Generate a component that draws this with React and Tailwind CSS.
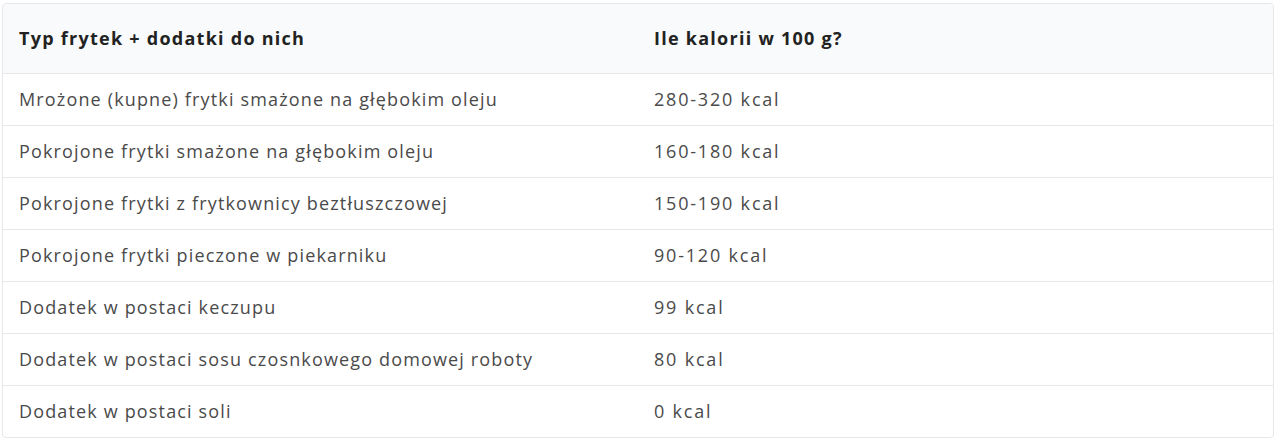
const rows = [
  ["Mrożone (kupne) frytki smażone na głębokim oleju", "280-320 kcal"],
  ["Pokrojone frytki smażone na głębokim oleju", "160-180 kcal"],
  ["Pokrojone frytki z frytkownicy beztłuszczowej", "150-190 kcal"],
  ["Pokrojone frytki pieczone w piekarniku", "90-120 kcal"],
  ["Dodatek w postaci keczupu", "99 kcal"],
  ["Dodatek w postaci sosu czosnkowego domowej roboty", "80 kcal"],
  ["Dodatek w postaci soli", "0 kcal"],
];

export default function App() {
  return (
    <div className="bg-white pl-[2px] pr-[6px] pt-[3px] font-['Open_Sans',sans-serif]">
      <table className="w-full border-separate border-spacing-0 overflow-hidden rounded-[4px] border border-[#e5e7eb] text-left">
        <thead>
          <tr className="bg-[#f9fafb]">
            <th className="h-[69px] w-[651px] pl-4 align-middle text-[18px] font-bold tracking-[0.07em] text-[#222222]">
              Typ frytek + dodatki do nich
            </th>
            <th className="h-[69px] align-middle text-[18px] font-bold tracking-[0.07em] text-[#222222]">
              Ile kalorii w 100 g?
            </th>
          </tr>
        </thead>
        <tbody>
          {rows.map(([name, kcal]) => (
            <tr key={name}>
              <td className="h-[52px] border-t border-[#e5e7eb] pl-4 align-middle text-[18px] tracking-[0.064em] text-[#4a4a4a]">
                {name}
              </td>
              <td className="h-[52px] border-t border-[#e5e7eb] align-middle text-[18px] tracking-[0.1em] text-[#4a4a4a]">
                {kcal}
              </td>
            </tr>
          ))}
        </tbody>
      </table>
    </div>
  );
}
